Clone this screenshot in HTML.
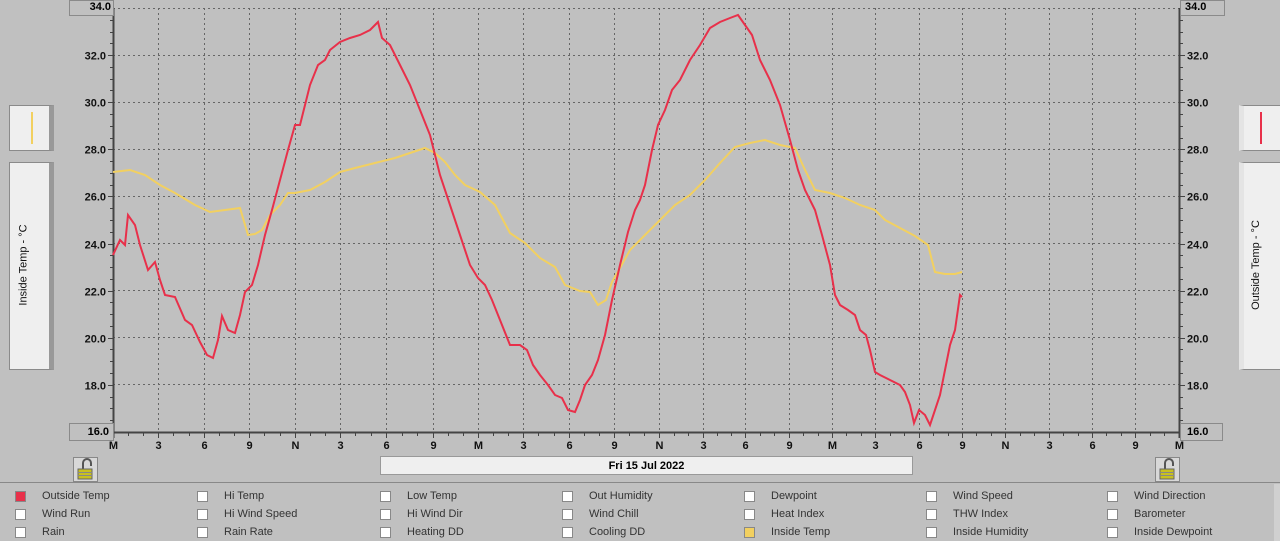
<!DOCTYPE html>
<html><head><meta charset="utf-8"><style>
body{margin:0;width:1280px;height:541px;background:#c0c0c0;overflow:hidden;font-family:"Liberation Sans",sans-serif;position:relative}
.ax{font:bold 11px "Liberation Sans",sans-serif;fill:#111}
.box{position:absolute;background:#efefef;border:1px solid #8a8a8a;box-sizing:border-box}
.rot{position:absolute;font-size:11px;color:#111;white-space:nowrap;transform:rotate(-90deg)}
.lg{position:absolute;font-size:11px;color:#333}
.cb{position:absolute;width:11px;height:11px;background:#fff;border:1px solid #888;box-sizing:border-box}
</style></head><body>
<svg width="1280" height="541" style="position:absolute;left:0;top:0">
<g stroke="#666" stroke-dasharray="2,3" stroke-width="1">
<line x1="113" y1="8.5" x2="1180" y2="8.5"/><line x1="113" y1="55.5" x2="1180" y2="55.5"/><line x1="113" y1="102.5" x2="1180" y2="102.5"/><line x1="113" y1="149.5" x2="1180" y2="149.5"/><line x1="113" y1="196.5" x2="1180" y2="196.5"/><line x1="113" y1="243.5" x2="1180" y2="243.5"/><line x1="113" y1="290.5" x2="1180" y2="290.5"/><line x1="113" y1="337.5" x2="1180" y2="337.5"/><line x1="113" y1="384.5" x2="1180" y2="384.5"/>
</g>
<g id="vg" stroke="#666" stroke-dasharray="2,3"></g>
<g id="tk" stroke="#444"></g>
<line x1="113.5" y1="8" x2="113.5" y2="438" stroke="#444" stroke-width="2"/>
<line x1="1179.5" y1="8" x2="1179.5" y2="438" stroke="#444" stroke-width="2"/>
<line x1="108" y1="432.5" x2="1185" y2="432.5" stroke="#444" stroke-width="2"/>
<g id="lb"></g>
<polyline fill="none" stroke="#f2d060" stroke-width="2" points="113,172 130,170 145,175 160,185 175,193 195,205 210,212 225,210 240,208 248,235 255,234 262,230 270,215 280,205 288,193 295,193 310,190 325,182 340,172 355,168 375,163 395,158 410,153 425,148 435,153 445,162 455,175 465,185 480,192 495,205 510,233 525,243 540,258 555,267 565,285 580,291 590,292 598,305 606,300 612,282 620,268 630,250 645,235 660,220 675,205 690,195 705,180 720,163 735,147 750,143 765,140 780,145 795,148 805,170 815,190 830,193 845,198 860,205 875,210 885,220 900,228 915,236 928,245 935,272 945,274 955,274 962,272"/>
<polyline fill="none" stroke="#e8304a" stroke-width="2" points="113,255 120,240 125,245 128,215 135,225 140,245 148,270 155,262 160,280 165,295 175,297 185,320 192,325 200,342 207,355 213,358 218,340 222,316 228,330 235,333 240,315 245,292 252,285 258,265 265,235 272,210 280,180 288,150 295,125 300,125 305,105 310,85 318,65 325,60 330,50 340,42 350,38 360,35 370,30 378,22 382,38 390,45 400,65 410,85 420,110 430,135 440,175 450,205 460,235 470,265 478,278 485,285 492,300 500,320 510,345 520,345 527,350 533,365 540,375 548,385 555,395 562,398 568,410 575,412 580,400 585,385 592,375 598,360 605,335 612,300 620,265 628,232 635,210 640,200 645,185 652,150 658,125 665,110 672,90 680,80 690,60 700,45 710,28 720,22 730,18 738,15 745,25 752,35 760,60 770,80 780,105 790,140 798,170 805,190 815,210 822,235 830,265 835,295 840,305 848,310 855,315 860,330 866,335 870,350 875,372 880,375 890,380 900,385 905,392 910,405 914,423 919,410 925,415 930,425 935,410 940,395 945,370 950,345 955,330 960,295 962,297"/>
</svg>
<div class="box" style="left:69px;top:0;width:45px;height:16px;background:#c0c0c0;font:bold 11px 'Liberation Sans';text-align:right;padding-right:2px;line-height:13px">34.0</div>
<div class="box" style="left:1180px;top:0;width:45px;height:16px;background:#c0c0c0;font:bold 11px 'Liberation Sans';padding-left:4px;line-height:13px">34.0</div>
<div class="box" style="left:69px;top:423px;width:45px;height:18px;background:#c0c0c0;font:bold 11px 'Liberation Sans';text-align:right;padding-right:4px;line-height:16px">16.0</div>
<div class="box" style="left:1180px;top:423px;width:43px;height:18px;background:#c0c0c0;font:bold 11px 'Liberation Sans';padding-left:6px;line-height:16px">16.0</div>
<div class="box" style="left:9px;top:105px;width:45px;height:46px;border-right:5px solid #999"><div style="position:absolute;left:21px;top:6px;width:2px;height:32px;background:#f2d060"></div></div>
<div class="box" style="left:9px;top:162px;width:45px;height:208px;border-right:5px solid #999"><div class="rot" style="left:-27px;top:96px">Inside Temp - °C</div></div>
<div class="box" style="left:1239px;top:105px;width:45px;height:46px;border-left:5px solid #e4e4e4"><div style="position:absolute;left:16px;top:6px;width:2px;height:32px;background:#e8304a"></div></div>
<div class="box" style="left:1239px;top:162px;width:45px;height:208px;border-left:5px solid #e4e4e4"><div class="rot" style="left:-33px;top:96px">Outside Temp - °C</div></div>
<div class="box" style="left:380px;top:456px;width:533px;height:19px;background:#efefef;font:bold 11px 'Liberation Sans';text-align:center;line-height:18px;border-color:#999">Fri 15 Jul 2022</div>
<svg width="25" height="25" style="position:absolute;left:73px;top:457px"><rect x="0.5" y="0.5" width="24" height="24" fill="#d8d8d8" stroke="#888"/><path d="M10 12V6a4 4 0 0 1 8 0v3" fill="none" stroke="#555" stroke-width="2"/><rect x="5" y="12" width="14" height="10" fill="#c8c020" stroke="#666"/><line x1="5" y1="15.5" x2="19" y2="15.5" stroke="#888"/><line x1="5" y1="18.5" x2="19" y2="18.5" stroke="#888"/></svg>
<svg width="25" height="25" style="position:absolute;left:1155px;top:457px"><rect x="0.5" y="0.5" width="24" height="24" fill="#d8d8d8" stroke="#888"/><path d="M10 12V6a4 4 0 0 1 8 0v3" fill="none" stroke="#555" stroke-width="2"/><rect x="5" y="12" width="14" height="10" fill="#c8c020" stroke="#666"/><line x1="5" y1="15.5" x2="19" y2="15.5" stroke="#888"/><line x1="5" y1="18.5" x2="19" y2="18.5" stroke="#888"/></svg>
<div style="position:absolute;left:0;top:482px;width:1280px;height:1px;background:#888"></div>
<div style="position:absolute;left:1274px;top:484px;width:6px;height:57px;background:#d0d0d0"></div>
<div id="leg"></div>
<script>
var vg=document.getElementById('vg'),tk=document.getElementById('tk'),lb=document.getElementById('lb'),ns='http://www.w3.org/2000/svg';
function el(p,t,a,txt){var e=document.createElementNS(ns,t);for(var k in a)e.setAttribute(k,a[k]);if(txt)e.textContent=txt;p.appendChild(e);}
var L=['M','3','6','9','N','3','6','9'];
var P=[113,158,204,249,295,340,386,433,478,523,569,614,659,703,745,789,832,875,919,962,1005,1049,1092,1135,1179];
for(var i=0;i<=24;i++){var x=P[i]+0.5;if(i>0&&i<24)el(vg,'line',{x1:x,y1:8,x2:x,y2:432});
el(tk,'line',{x1:x,y1:432,x2:x,y2:438});el(lb,'text',{x:x,y:449,'text-anchor':'middle','class':'ax'},L[i%8]);
if(i<24)for(var j=1;j<3;j++){var xx=Math.round(P[i]+(P[i+1]-P[i])*j/3)+0.5;el(tk,'line',{x1:xx,y1:432,x2:xx,y2:436});}}
for(var t=16;t<=34;t+=0.5){var y=Math.round(8+(34-t)*23.55)+0.5,mj=(t%2==0);
el(tk,'line',{x1:mj?108:110,y1:y,x2:113,y2:y});el(tk,'line',{x1:1180,y1:y,x2:mj?1185:1183,y2:y});
if(mj&&t>16&&t<34){el(lb,'text',{x:106,y:y+4,'text-anchor':'end','class':'ax'},t.toFixed(1));el(lb,'text',{x:1187,y:y+4,'class':'ax'},t.toFixed(1));}}
var names=[['Outside Temp','Hi Temp','Low Temp','Out Humidity','Dewpoint','Wind Speed','Wind Direction'],['Wind Run','Hi Wind Speed','Hi Wind Dir','Wind Chill','Heat Index','THW Index','Barometer'],['Rain','Rain Rate','Heating DD','Cooling DD','Inside Temp','Inside Humidity','Inside Dewpoint']];
var cx=[15,197,380,562,744,926,1107],h='';
for(var r=0;r<3;r++)for(var c=0;c<7;c++){var y=491+r*18,bg=(r==0&&c==0)?'#e8304a':(r==2&&c==4)?'#f2d060':'#fff';
h+='<div class="cb" style="left:'+cx[c]+'px;top:'+y+'px;background:'+bg+'"></div><div class="lg" style="left:'+(cx[c]+27)+'px;top:'+(y-1)+'px">'+names[r][c]+'</div>';}
document.getElementById('leg').innerHTML=h;
</script>
</body></html>
